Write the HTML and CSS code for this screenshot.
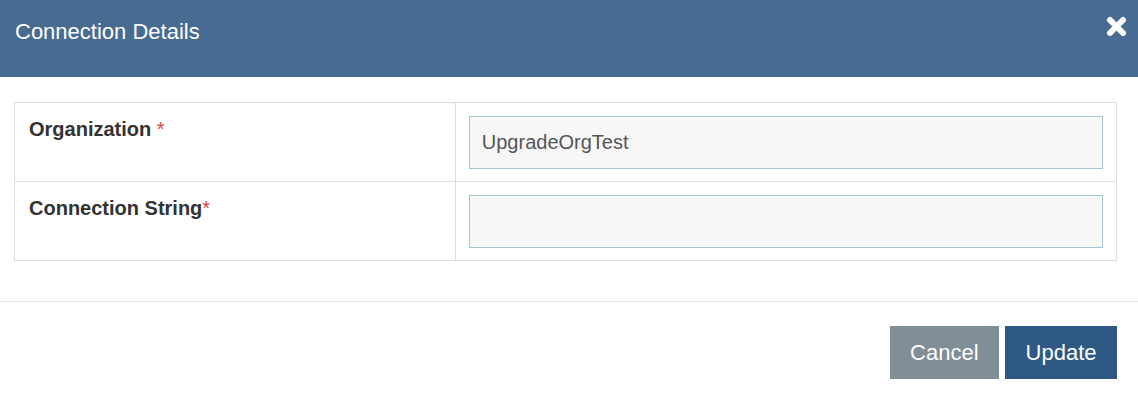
FILE: index.html
```html
<!DOCTYPE html>
<html lang="en">
<head>
<meta charset="UTF-8">
<meta name="viewport" content="width=device-width, initial-scale=1.0">
<title>Connection Details</title>
<link rel="stylesheet" href="styles.css">
</head>
<body>

<div class="modal">
<!-- Header with title and close icon -->
<div class="modal-header">
<h4 class="modal-title">Connection Details</h4>
<button class="close-button" aria-label="Close">
<svg width="21" height="21" viewBox="0 0 21 21">
<path d="M4 4 L17 17 M17 4 L4 17" stroke="#fff" stroke-width="6" stroke-linecap="round"/>
</svg>
</button>
</div>

<div class="modal-body">
<table class="details-table">
<tr>
<td class="label-cell">Organization <span class="required">*</span></td>
<td class="input-cell"><input class="form-input" type="text" value="UpgradeOrgTest" readonly></td>
</tr>
<tr>
<td class="label-cell">Connection String<span class="required">*</span></td>
<td class="input-cell"><input class="form-input" type="text" value=""></td>
</tr>
</table>
</div>

<div class="modal-footer">
<button class="btn btn-cancel">Cancel</button>
<button class="btn btn-update">Update</button>
</div>
</div>

</body>
</html>
```

FILE: styles.css
```css
body {
margin: 0;
font-family: "Liberation Sans", Arial, sans-serif;
background: #fff;
color: #333;
}

/* Header bar */
.modal-header {
display: flex;
justify-content: space-between;
align-items: flex-start;
height: 77px;
background: #476b91;
box-sizing: border-box;
padding: 0 11px 0 15px;
}

.modal-title {
margin: 0;
padding-top: 19px;
font-size: 22px;
font-weight: normal;
line-height: 26px;
color: #fff;
}

.close-button {
background: none;
border: none;
padding: 0;
margin-top: 16px;
cursor: pointer;
line-height: 0;
}

/* Body with the details table */
.modal-body {
padding: 25px 21px 40px 14px;
}

.details-table {
width: 100%;
border-collapse: collapse;
}

.details-table td {
border: 1px solid #ddd;
vertical-align: top;
}

.label-cell {
width: 40%;
padding: 12px 14px;
font-size: 20px;
font-weight: bold;
line-height: 28px;
}

.required {
color: #e0403a;
font-weight: normal;
}

.input-cell {
padding: 12.5px 13px 12.5px 13px;
}

.form-input {
display: block;
width: 100%;
height: 53px;
box-sizing: border-box;
padding: 0 12px;
border: 1px solid #a3c6d6;
background: #f7f7f7;
font-family: "Liberation Sans", Arial, sans-serif;
font-size: 20px;
color: #555;
outline: none;
}

/* Footer with buttons */
.modal-footer {
display: flex;
justify-content: flex-end;
gap: 6px;
border-top: 1px solid #e5e5e5;
padding: 24px 21px 14px 0;
}

.btn {
height: 53px;
padding: 0 20.5px;
border: none;
font-family: "Liberation Sans", Arial, sans-serif;
font-size: 22px;
color: #fff;
cursor: pointer;
}

.btn-cancel {
background: #808e97;
}

.btn-update {
background: #2e5985;
}
```
